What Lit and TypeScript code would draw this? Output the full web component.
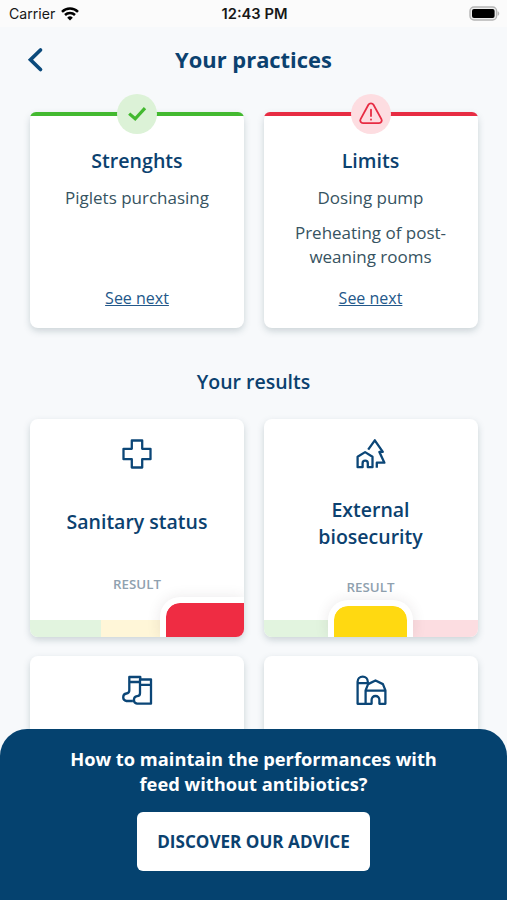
import { LitElement, html, css, svg } from "lit";
import { customElement, property } from "lit/decorators.js";

const icons = {
  health: svg`<path d="M10.8 2.5h10.4v8.3h8.3v10.4h-8.3v8.3H10.8v-8.3H2.5V10.8h8.3z"/>`,
  biosecurity: svg`<path d="M13.2 11.6 19.8 2.3l8 11.6h-3.4l5 10.8h-7.6v5"/>
    <path d="M2.6 29.2V18.8l7.5-4.7 7.4 4.7v10.4h-4.7v-4a2.6 2.6 0 0 0-5.2 0v4z"/>`,
  socks: svg`<path d="M19.3 4V2H8.3v13.6c0 1.9-1.1 2.7-2.9 2.9a3.8 3.8 0 0 0 0 7.5h6.5M8.3 7h10"/>
    <path d="M30 4.5H19v13.8c0 1.9-1 2.8-2.9 2.9a3.8 3.8 0 0 0 0 7.5H30zM19 9.8h11"/>`,
  barn: svg`<path d="M10.6 28.8h-8V6.7a5.1 5.1 0 0 1 10.2 0v1.6M2.6 8.1h10.2"/>
    <path d="M10.6 28.8V15.4l2.5-6.3 7.4-3.6 7.4 3.6 2.5 6.3v13.4h-6v-3.9a3.9 3.9 0 0 0-7.8 0v3.9zM10.6 15.6h19.8"/>`,
};
type IconName = keyof typeof icons;

@customElement("practice-card")
class PracticeCard extends LitElement {
  @property() heading = "";
  @property() tone: "good" | "bad" = "good";
  @property({ attribute: false }) items: string[] = [];

  static styles = css`
    :host { display: block; }
    .card {
      position: relative; box-sizing: border-box; height: 216.5px;
      display: flex; flex-direction: column; align-items: center;
      padding: 35px 16px 18px; text-align: center; border-radius: 8px; background: #fff;
      box-shadow: 0 3px 7px rgba(50, 80, 90, 0.22);
    }
    .line { position: absolute; inset: 0 0 auto 0; height: 8px; border-radius: 6px 6px 0 0; overflow: hidden; }
    .line::before { content: ""; display: block; height: 4px; }
    .good .line::before { background: #43b930; }
    .bad .line::before { background: #e72c43; }
    .badge {
      position: absolute; top: -18px; left: 50%; width: 40px; height: 40px; margin-left: -20px;
      border-radius: 50%; display: grid; place-items: center;
    }
    .good .badge { background: #dcf2d7; }
    .bad .badge { background: #fddde1; }
    h2 { margin: 0; font-size: 19.6px; line-height: 27px; font-weight: 600; color: #0b416f; }
    ul { list-style: none; margin: 12px 0 0; padding: 0; display: grid; gap: 12px; }
    li { font-size: 17px; line-height: 23.5px; color: #365361; }
    a { margin-top: auto; font-size: 16px; line-height: 24px; color: #23588a; text-decoration: underline; text-underline-offset: 1px; text-decoration-thickness: 1px; }
  `;

  render() {
    const good = this.tone === "good";
    return html`<section class="card ${this.tone}">
      <div class="line"></div>
      <div class="badge">
        ${good
          ? html`<svg width="40" height="40" fill="none" stroke="#43b930" stroke-width="3.2"><path d="m12.2 19.6 6 5.2L28 14.2"/></svg>`
          : html`<svg width="40" height="40" fill="none" stroke="#e72c43" stroke-width="1.8" stroke-linecap="round" stroke-linejoin="round"><path d="M17.4 10.8c1.1-1.9 4-1.9 5.1 0l7.9 14.3c1 1.8-.2 4-2.4 4H12c-2.2 0-3.4-2.2-2.4-4zM20 15.6v6.4M20 25.5v.2"/></svg>`}
      </div>
      <h2>${this.heading}</h2>
      <ul>${this.items.map((i) => html`<li>${i}</li>`)}</ul>
      <a>See next</a>
    </section>`;
  }
}

@customElement("result-card")
class ResultCard extends LitElement {
  @property() heading = "";
  @property() icon: IconName = "health";
  @property() level: "" | "medium" | "low" = "";

  static styles = css`
    :host { display: block; }
    .card {
      box-sizing: border-box; height: 217.5px; border-radius: 8px; background: #fff; overflow: hidden;
      display: flex; flex-direction: column; align-items: center; padding-top: 18.5px; text-align: center;
      box-shadow: 0 3px 7px rgba(50, 80, 90, 0.22);
    }
    .icon { flex: none; fill: none; stroke: #0b4677; stroke-width: 2.3; stroke-linejoin: round; }
    h2 {
      margin: 18px 0 0; min-height: 68px; width: 150px; display: grid; place-items: center;
      font-size: 19.5px; line-height: 27px; font-weight: 600; color: #0b416f;
    }
    .medium h2 { min-height: 71px; }
    .caption { margin-top: 19px; font-size: 13.3px; line-height: 18px; font-weight: 600; color: #8fa1af; }
    .scale { position: relative; margin-top: auto; align-self: stretch; height: 17px; display: grid; grid-template-columns: repeat(3, 1fr); }
    .g { background: #e2f4df; }
    .y { background: #fff6d8; }
    .r { background: #fcdde1; }
    .tab { position: absolute; bottom: 0; box-sizing: border-box; border: 6px solid #fff; border-bottom: 0; box-shadow: 0 0 14px rgba(60, 40, 50, 0.1); background-clip: padding-box; }
    .low .tab { left: 130px; right: 0; height: 39.5px; border-right: 0; border-radius: 20px 0 0 0; background-color: #ef2c43; }
    .medium .tab { left: 64.5px; right: 65px; height: 37px; border-radius: 20px 20px 0 0; background-color: #ffd911; }
  `;

  render() {
    return html`<section class="card ${this.level}">
      <svg class="icon" width="32" height="32" viewBox="0 0 32 32">${icons[this.icon]}</svg>
      ${this.level
        ? html`<h2>${this.heading}</h2>
            <div class="caption">RESULT</div>
            <div class="scale"><i class="g"></i><i class="y"></i><i class="r"></i><b class="tab"></b></div>`
        : null}
    </section>`;
  }
}

@customElement("app-root")
class AppRoot extends LitElement {
  static styles = css`
    :host {
      position: relative; display: block; width: 507px; height: 900px; overflow: hidden;
      background: #f7f9fb; font-family: "Open Sans", "Noto Sans", sans-serif;
    }
    .status {
      box-sizing: border-box; height: 27px; padding: 0 7px 0 9px; background: #fbfbfb; color: #171717;
      display: grid; grid-template-columns: 1fr auto 1fr; align-items: center;
      font-family: Inter, "Liberation Sans", sans-serif; font-size: 14.7px;
    }
    .carrier { display: flex; align-items: center; gap: 6px; font-size: 14.1px; }
    .time { font-weight: 600; }
    .battery { justify-self: end; }
    header { height: 66px; display: grid; grid-template-columns: 70px 1fr 70px; align-items: center; text-align: center; }
    h1 { margin: 0; font-size: 21.9px; line-height: 30px; font-weight: 700; color: #0b416f; }
    .grid { display: grid; grid-template-columns: 214px 214px; gap: 19.5px; padding: 0 29.5px 0 30px; }
    .practices { padding-top: 18.5px; }
    .subtitle { margin: 38.5px 0 22.5px; line-height: 30px; text-align: center; font-size: 19.5px; font-weight: 600; color: #0b416f; }
    .sheet {
      position: absolute; inset: auto 0 0 0; height: 171px; box-sizing: border-box; padding-top: 18px;
      border-radius: 27px 27px 0 0; background: #05426f; color: #fff;
      display: flex; flex-direction: column; align-items: center;
    }
    .sheet p { margin: 0; text-align: center; font-size: 18.3px; line-height: 24.5px; font-weight: 700; }
    button {
      margin-top: 16px; width: 233px; height: 59px; padding: 0; border: 0; border-radius: 6px; background: #fff;
      font: 700 17.1px "Open Sans", sans-serif; color: #0b416f;
    }
  `;

  render() {
    return html`
      <div class="status">
        <div class="carrier">
          <span>Carrier</span>
          <svg width="18" height="14" viewBox="0 0 18 14" fill="none" stroke="#000" stroke-width="2.5">
            <path d="M1 4.8a11.5 11.5 0 0 1 16 0M4 8a7.2 7.2 0 0 1 10 0"/>
            <path d="M9 13.6 6.2 10.7a4 4 0 0 1 5.6 0z" fill="#000" stroke="none"/>
          </svg>
        </div>
        <span class="time">12:43 PM</span>
        <svg class="battery" width="31" height="15" viewBox="0 0 31 15">
          <rect x="1" y="1" width="26.6" height="13" rx="4" fill="#eee" stroke="#b5b5b5" stroke-width="1.4"/>
          <rect x="3" y="3" width="22.6" height="9" rx="2" fill="#000"/>
          <path d="M28.6 5.2c2.2.6 2.2 4 0 4.6z" fill="#b5b5b5"/>
        </svg>
      </div>
      <header>
        <svg width="70" height="40" fill="none" stroke="#0b4a7c" stroke-width="3.7" stroke-linecap="round"><path d="M40.5 10 30.5 19.7l10 9.8"/></svg>
        <h1>Your practices</h1>
      </header>
      <div class="grid practices">
        <practice-card heading="Strenghts" tone="good" .items=${["Piglets purchasing"]}></practice-card>
        <practice-card heading="Limits" tone="bad" .items=${["Dosing pump", "Preheating of post-weaning rooms"]}></practice-card>
      </div>
      <div class="subtitle">Your results</div>
      <div class="grid">
        <result-card heading="Sanitary status" icon="health" level="low"></result-card>
        <result-card heading="External biosecurity" icon="biosecurity" level="medium"></result-card>
        <result-card icon="socks"></result-card>
        <result-card icon="barn"></result-card>
      </div>
      <div class="sheet">
        <p>How to maintain the performances with<br />feed without antibiotics?</p>
        <button>DISCOVER OUR ADVICE</button>
      </div>
    `;
  }
}
